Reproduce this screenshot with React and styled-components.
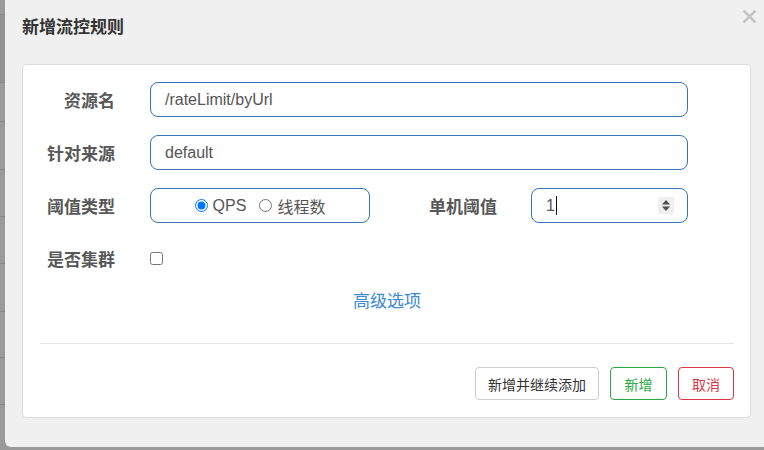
import React from "react";
import styled, { createGlobalStyle } from "styled-components";

const GlobalStyle = createGlobalStyle`
  html, body {
    margin: 0;
    padding: 0;
  }
  body {
    font-family: "Liberation Sans", "Noto Sans CJK SC", sans-serif;
    background: #9a9a9a;
    overflow: hidden;
  }
`;

const Page = styled.div`
  position: relative;
  width: 764px;
  height: 450px;
  overflow: hidden;
  background: #9a9a9a;
`;

const BackdropRow = styled.div`
  height: ${(p) => p.h}px;
  border-bottom: 1px solid #8a8a8a;
  background: ${(p) => (p.dark ? "#939393" : "#9a9a9a")};
  box-sizing: border-box;
`;

const Modal = styled.div`
  position: absolute;
  left: 5px;
  right: -4px;
  top: -6px;
  height: 453px;
  box-sizing: border-box;
  background: #f0f0f0;
  border-radius: 6px;
  padding: 22px 17px 29px 17px;
  display: flex;
  flex-direction: column;
`;

const Title = styled.h3`
  margin: 0 0 24px 0;
  font-size: 17px;
  line-height: 24px;
  font-weight: bold;
  color: #333;
`;

const Close = styled.button`
  position: absolute;
  top: 15px;
  right: 12px;
  width: 14px;
  height: 14px;
  padding: 0;
  border: none;
  background: none;
  display: flex;
  align-items: center;
  justify-content: center;
`;

const Card = styled.div`
  flex: 1;
  background: #fff;
  border: 1px solid #dcdcdc;
  border-radius: 4px;
  padding: 17px 16px 17px 17px;
  display: flex;
  flex-direction: column;
`;

const Row = styled.div`
  display: flex;
  align-items: center;
  height: 35px;
  margin-bottom: 18px;
`;

const Label = styled.label`
  width: 75px;
  flex: none;
  text-align: right;
  font-size: 17px;
  font-weight: bold;
  color: #585858;
  margin-right: ${(p) => p.gap || 35}px;
  margin-left: ${(p) => p.offset || 0}px;
`;

const TextField = styled.div`
  box-sizing: border-box;
  width: ${(p) => p.w}px;
  height: 35px;
  border: 1px solid #3476b7;
  border-radius: 8px;
  padding: 0 14px;
  display: flex;
  align-items: center;
  font-size: 16px;
  color: #555;
`;

const RadioBox = styled(TextField)`
  justify-content: center;
  gap: 13px;
`;

const RadioOption = styled.label`
  display: inline-flex;
  align-items: center;
  gap: 5px;
  font-size: 16px;
  color: #555;

  input {
    margin: 0;
    width: 13px;
    height: 13px;
  }
`;

const Caret = styled.span`
  display: inline-block;
  width: 1px;
  height: 19px;
  background: #111;
  margin-left: 1px;
`;

const Spinner = styled.span`
  margin-left: auto;
  margin-right: -1px;
  width: 16px;
  height: 17px;
  background: #efefef;
  display: flex;
  align-items: center;
  justify-content: center;
`;

const Check = styled.input`
  margin: 0;
  width: 13px;
  height: 13px;
`;

const Advanced = styled.a`
  display: block;
  text-align: center;
  margin: -4px 0 0 0;
  line-height: 24px;
  font-size: 17px;
  color: #3c8ad4;
  text-decoration: none;
`;

const Divider = styled.hr`
  margin: 29px 0 23px 0;
  border: none;
  border-top: 1px solid #e5e5e5;
  height: 0;
`;

const Footer = styled.div`
  display: flex;
  justify-content: flex-end;
  gap: 11px;
`;

const Btn = styled.button`
  height: 33px;
  padding: 0 12px;
  background: #fff;
  border: 1px solid ${(p) => p.color};
  color: ${(p) => p.text || p.color};
  border-radius: 4px;
  font-family: "Liberation Sans", "Noto Sans CJK SC", sans-serif;
  font-size: 14px;
  min-width: ${(p) => p.min || 0}px;
`;

const backdrop = [15, 68, 39, 48, 47, 47, 48, 46, 47, 47, 47];

export default function App() {
  return (
    <>
      <GlobalStyle />
      <Page>
        {backdrop.map((h, i) => (
          <BackdropRow key={i} h={h} dark={i === 1} />
        ))}
        <Modal>
          <Close aria-label="close">
            <svg width="13" height="13" viewBox="0 0 13 13">
              <path
                d="M1.5 1.5 L11.5 11.5 M11.5 1.5 L1.5 11.5"
                stroke="#c4c4c4"
                strokeWidth="2.6"
                strokeLinecap="square"
              />
            </svg>
          </Close>
          <Title>新增流控规则</Title>
          <Card>
            <Row>
              <Label>资源名</Label>
              <TextField w={538}>/rateLimit/byUrl</TextField>
            </Row>
            <Row>
              <Label>针对来源</Label>
              <TextField w={538}>default</TextField>
            </Row>
            <Row>
              <Label>阈值类型</Label>
              <RadioBox w={220}>
                <RadioOption>
                  <input type="radio" name="grade" defaultChecked />
                  QPS
                </RadioOption>
                <RadioOption>
                  <input type="radio" name="grade" />
                  线程数
                </RadioOption>
              </RadioBox>
              <Label offset={52} gap={34}>
                单机阈值
              </Label>
              <TextField w={157}>
                1<Caret />
                <Spinner>
                  <svg width="8" height="13" viewBox="0 0 8 13">
                    <path d="M4 1 L8 5.5 L0 5.5 Z" fill="#505050" />
                    <path d="M0 7.5 L8 7.5 L4 12 Z" fill="#505050" />
                  </svg>
                </Spinner>
              </TextField>
            </Row>
            <Row>
              <Label>是否集群</Label>
              <Check type="checkbox" />
            </Row>
            <Advanced href="#">高级选项</Advanced>
            <Divider />
            <Footer>
              <Btn color="#cccccc" text="#333">
                新增并继续添加
              </Btn>
              <Btn color="#2aa845" min={57}>
                新增
              </Btn>
              <Btn color="#dc3545" min={56}>
                取消
              </Btn>
            </Footer>
          </Card>
        </Modal>
      </Page>
    </>
  );
}
